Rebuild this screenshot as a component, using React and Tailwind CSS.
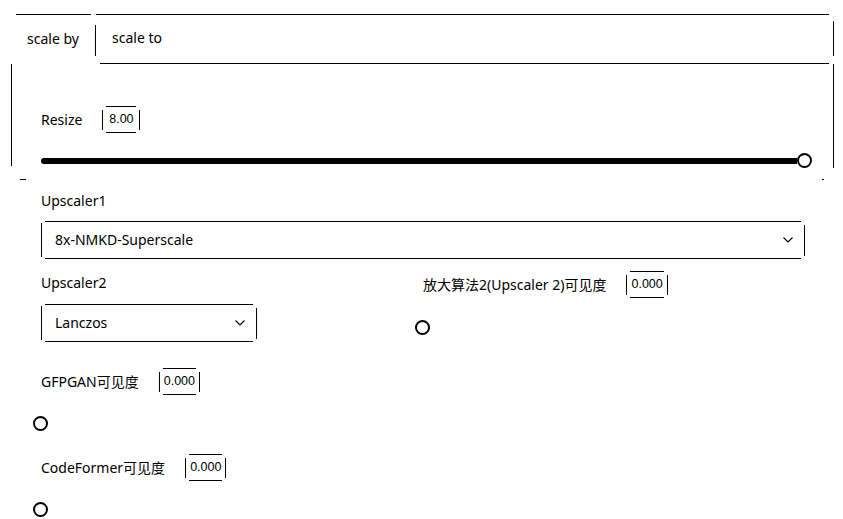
import React from "react";

const font = { fontFamily: '"Noto Sans", "Noto Sans CJK SC", sans-serif' };

function NumBox({ value }) {
  return (
    <div className="flex items-center h-[27px]">
      <div className="w-px h-[20px] bg-black" />
      <div
        className="h-full min-w-[30px] border-y border-black mx-[3px] px-[1px] flex items-center justify-center text-[12.5px] leading-none"
        style={{ fontFamily: '"Liberation Sans", sans-serif' }}
      >
        {value}
      </div>
      <div className="w-px h-[20px] bg-black" />
    </div>
  );
}

function Thumb({ className = "" }) {
  return (
    <div
      className={
        "w-[15px] h-[15px] rounded-full border-2 border-black bg-white shrink-0 " +
        className
      }
    />
  );
}

function Chevron() {
  return (
    <svg width="10" height="6" viewBox="0 0 10 6" className="shrink-0">
      <polyline
        points="0.5,0.5 5,5 9.5,0.5"
        fill="none"
        stroke="black"
        strokeWidth="1.2"
      />
    </svg>
  );
}

function Dropdown({ value, width }) {
  return (
    <div className={"flex items-center h-[38px] " + width}>
      <div className="w-px h-[34px] bg-black shrink-0" />
      <div className="flex-1 h-full mx-[3px] border-y border-black flex items-center justify-between pl-[10px] pr-[8px]">
        <span>{value}</span>
        <Chevron />
      </div>
      <div className="w-px h-[31px] bg-black shrink-0" />
    </div>
  );
}

function SliderRow({ label, value }) {
  return (
    <div className="flex items-center gap-[20px] h-[27px]">
      <span>{label}</span>
      <NumBox value={value} />
    </div>
  );
}

export default function App() {
  return (
    <div
      className="w-[843px] h-[519px] bg-white text-black text-[14px] leading-[20px] overflow-hidden pt-[14px]"
      style={font}
    >
      {/* Tabs + panel */}
      <div className="ml-[11px] w-[823px] flex flex-col">
        <div className="flex h-[50px]">
          <div className="w-[85px] flex flex-col">
            <div className="mx-[5px] h-px bg-black" />
            <div className="flex-1 flex items-center">
              <span className="flex-1 pl-[16px] pb-[2px]">scale by</span>
              <div className="w-px h-[31px] bg-black mt-[2px]" />
            </div>
          </div>
          <div className="flex-1 flex flex-col">
            <div className="mr-[4px] h-px bg-black" />
            <div className="flex-1 flex items-center pl-[16px] pb-[2px]">
              scale to
            </div>
            <div className="ml-[4px] mr-[4px] h-px bg-black" />
          </div>
          <div className="w-px h-[35px] bg-black mt-[7px]" />
        </div>
        <div className="flex">
          <div className="w-px bg-black mb-[2px]" />
          <div className="flex-1 pl-[29px] pr-[21px] pt-[42px]">
            <SliderRow label="Resize" value="8.00" />
            <div className="mt-[20px] h-[15px] flex items-center">
              <div className="flex-1 h-[6px] bg-black rounded-l-[3px]" />
              <Thumb />
            </div>
          </div>
          <div className="w-px bg-black" />
        </div>
        <div className="flex justify-between h-px mt-[11px] px-[9px]">
          <div className="w-[6px] h-px bg-black" />
          <div className="w-[2px] h-px bg-black mr-[1px]" />
        </div>
      </div>

      {/* Controls */}
      <div className="pl-[41px]">
        <div className="mt-[11px] h-[20px]">Upscaler1</div>
        <div className="mt-[10px]">
          <Dropdown value="8x-NMKD-Superscale" width="w-[764px]" />
        </div>

        <div className="mt-[12px] flex">
          <div className="w-[382px]">
            <div className="mt-[2px] h-[20px]">Upscaler2</div>
            <div className="mt-[11px]">
              <Dropdown value="Lanczos" width="w-[216px]" />
            </div>
          </div>
          <div className="flex flex-col">
            <SliderRow label="放大算法2(Upscaler 2)可见度" value="0.000" />
            <Thumb className="mt-[22px] -ml-[8px]" />
          </div>
        </div>

        <div className="mt-[26px]">
          <SliderRow label="GFPGAN可见度" value="0.000" />
          <Thumb className="mt-[21px] -ml-[8px]" />
        </div>

        <div className="mt-[23px]">
          <SliderRow label="CodeFormer可见度" value="0.000" />
          <Thumb className="mt-[21px] -ml-[8px]" />
        </div>
      </div>
    </div>
  );
}
